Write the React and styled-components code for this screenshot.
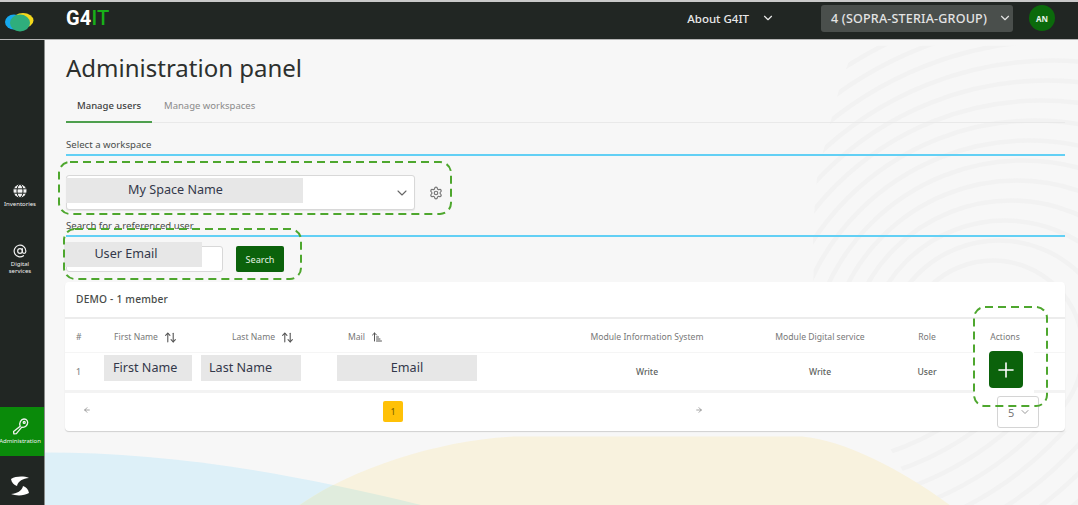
import React from 'react';
import styled, { createGlobalStyle } from 'styled-components';
import { ChevronDown, Settings, AtSign, ArrowUpDown, ArrowUpNarrowWide, Plus, ArrowLeft, ArrowRight } from 'lucide-react';

const GlobalStyle = createGlobalStyle`
    html, body { margin: 0; padding: 0; height: 100%; overflow: hidden; }
    body { font-family: "Noto Sans", "Liberation Sans", sans-serif; background: #f7f7f7; color: #2b2f2c; }
`;

const Shell = styled.div`
    display: grid;
    grid-template-columns: 45px 1fr;
    grid-template-rows: 40px 1fr;
    width: 1078px;
    height: 505px;
    overflow: hidden;
`;

const TopBar = styled.header`
    grid-column: 1 / 3;
    display: flex;
    align-items: center;
    box-sizing: border-box;
    border-top: 2px solid #c9c9c9;
    border-bottom: 1px solid #b5b5b5;
    background: #212623;
    color: #fff;
    padding: 0 23px 5px 5px;
`;

const Logo = styled.svg`
    width: 29px;
    height: 20px;
    margin-top: 7px;
`;

const Brand = styled.div`
    margin-left: 32px;
    font-family: "Roboto", sans-serif;
    font-size: 20px;
    font-weight: 700;
    letter-spacing: 0.2px;

    span { color: #18b018; font-weight: 500; }
`;

const AboutMenu = styled.div`
    display: flex;
    align-items: center;
    gap: 12px;
    margin-left: auto;
    font-size: 11.5px;
    font-weight: 500;
    color: #e8e8e8;
`;

const OrgSelect = styled.div`
    display: flex;
    align-items: center;
    justify-content: space-between;
    width: 192px;
    height: 27px;
    box-sizing: border-box;
    margin-left: 46px;
    padding: 0 1px 0 10px;
    background: #4a4f4c;
    border-radius: 3px;
    font-size: 12.5px;
    font-weight: 500;
    letter-spacing: 0.2px;
    color: #e4e4e4;
    white-space: nowrap;
`;

const Avatar = styled.div`
    display: flex;
    align-items: center;
    justify-content: center;
    width: 26px;
    height: 26px;
    margin-left: 16px;
    border-radius: 50%;
    background: #0b6a0b;
    font-size: 8px;
    font-weight: 700;
    color: #e8f3e8;
`;

const SideBar = styled.nav`
    display: flex;
    flex-direction: column;
    background: #212623;
    border-right: 1px solid #8a8d8b;
    box-sizing: border-box;
`;

const SideItem = styled.div`
    display: flex;
    flex-direction: column;
    align-items: center;
    justify-content: center;
    box-sizing: border-box;
    height: ${p => p.$h}px;
    margin-top: ${p => p.$top}px;
    padding-right: 4px;
    background: ${p => (p.$active ? '#0a8a0a' : 'transparent')};
    color: #f2f2f2;
    font-size: 6px;
    line-height: 7px;
    text-align: center;

    svg { margin-bottom: ${p => p.$gap}px; }
`;

const Main = styled.main`
    position: relative;
    overflow: hidden;
    background: #f7f7f7;
`;

const Backdrop = styled.svg`
    position: absolute;
    inset: 0;
    width: 100%;
    height: 100%;
`;

const Content = styled.div`
    position: relative;
    display: flex;
    flex-direction: column;
    padding: 0 13px 0 21px;
`;

const Title = styled.h1`
    margin: 11px 0 0;
    font-size: 24px;
    line-height: 34px;
    font-weight: 400;
    color: #2d302e;
`;

const Tabs = styled.div`
    display: flex;
    gap: 1px;
    height: 31px;
    margin-top: 6px;
    border-bottom: 1px solid #e9e9e9;
`;

const Tab = styled.div`
    box-sizing: border-box;
    height: 32px;
    padding: 8px 11px 0;
    font-size: 9.5px;
    line-height: 14px;
    color: ${p => (p.$active ? '#3d403e' : '#8a8a8a')};
    font-weight: ${p => (p.$active ? 500 : 400)};
    border-bottom: 2px solid ${p => (p.$active ? '#4e9f4e' : 'transparent')};
`;

const SectionLabel = styled.div`
    margin-top: ${p => p.$top}px;
    height: 20px;
    box-sizing: border-box;
    padding-top: 2px;
    border-bottom: 2px solid #62d0f5;
    font-size: 9.6px;
    line-height: 14px;
    color: #4a4d4b;
`;

const SelectRow = styled.div`
    display: flex;
    align-items: center;
    gap: 14px;
    margin-top: 19px;
    color: #777;
`;

const WorkspaceSelect = styled.div`
    position: relative;
    display: flex;
    align-items: center;
    justify-content: flex-end;
    width: 349px;
    height: 35px;
    box-sizing: border-box;
    padding-right: 4px;
    background: #fff;
    border: 1px solid #d8d8d8;
    border-radius: 3px;
    box-shadow: 0 1px 1px rgba(0, 0, 0, 0.08);
`;

const Mask = styled.div`
    position: absolute;
    left: ${p => p.$left}px;
    top: ${p => p.$top}px;
    width: ${p => p.$w}px;
    height: ${p => p.$h}px;
    display: flex;
    align-items: center;
    justify-content: ${p => p.$align || 'center'};
    box-sizing: border-box;
    padding: 0 ${p => p.$right || 0}px 2px ${p => p.$pad || 0}px;
    background: #e7e7e7;
    font-size: 12.6px;
    font-weight: 400;
    color: #33384a;
    white-space: nowrap;
`;

const SearchRow = styled.div`
    display: flex;
    gap: 13px;
    margin-top: 9px;
`;

const SearchInput = styled.div`
    position: relative;
    width: 157px;
    height: 26px;
    box-sizing: border-box;
    background: #fff;
    border: 1px solid #d8d8d8;
    border-radius: 3px;
`;

const SearchButton = styled.button`
    width: 48px;
    height: 26px;
    padding: 0;
    border: 0;
    border-radius: 2px;
    background: #0b620b;
    color: #d5e6d5;
    font-family: inherit;
    font-size: 9px;
    font-weight: 500;
`;

const Card = styled.section`
    display: flex;
    flex-direction: column;
    height: 149px;
    margin: 10px 0 0 -1px;
    background: #fff;
    border-radius: 4px;
    box-shadow: 0 1px 1px rgba(0, 0, 0, 0.16);
`;

const CardTitle = styled.div`
    height: 37px;
    box-sizing: border-box;
    padding: 10px 11px 0;
    border-bottom: 2px solid #ececec;
    font-size: 10.2px;
    line-height: 14px;
    font-weight: 500;
    letter-spacing: 0.2px;
    color: #484b49;
`;

const Row = styled.div`
    display: grid;
    grid-template-columns: 38px 118px 116px 212px 174px 172px 42px 114px;
    align-items: center;
    position: relative;
    height: ${p => p.$h}px;
    padding-left: 11px;
    padding-top: ${p => p.$pt || 0}px;
    box-sizing: border-box;
    border-bottom: ${p => p.$line}px solid ${p => p.$color};
    font-size: 8.6px;
    font-weight: 500;
    color: #5c5f5d;
`;

const HeadCell = styled.div`
    display: flex;
    align-items: center;
    justify-content: ${p => (p.$center ? 'center' : 'flex-start')};
    gap: 6px;
    font-size: 8.6px;
    font-weight: 400;
    color: #777;
    white-space: nowrap;

    svg { color: #555; }
`;

const Cell = styled.div`
    text-align: ${p => (p.$center ? 'center' : 'left')};
    color: ${p => (p.$muted ? '#8a8a8a' : 'inherit')};
`;

const ActionBox = styled.div`
    position: absolute;
    left: 909px;
    top: -10px;
    width: 60px;
    height: 50px;
    display: flex;
    align-items: center;
    justify-content: center;
    box-sizing: border-box;
    padding: 3px 0 0 4px;
    background: #fff;
`;

const AddButton = styled.button`
    display: flex;
    align-items: center;
    justify-content: center;
    width: 34px;
    height: 37px;
    padding: 0;
    border: 0;
    border-radius: 4px;
    background: #0b620b;
    color: #fff;
`;

const Footer = styled.div`
    position: relative;
    flex: 1;
    color: #777;
`;

const FooterArrow = styled.span`
    position: absolute;
    left: ${p => p.$left}px;
    top: 13px;
    display: flex;
`;

const PageNumber = styled.div`
    position: absolute;
    left: 318px;
    top: 8px;
    width: 20px;
    height: 21px;
    display: flex;
    align-items: center;
    justify-content: center;
    border-radius: 2px;
    background: #ffc107;
    font-size: 8px;
    font-weight: 500;
    color: #7a6200;
`;

const PageSize = styled.div`
    position: absolute;
    left: 932px;
    top: 3px;
    width: 42px;
    height: 32px;
    display: flex;
    align-items: center;
    gap: 5px;
    box-sizing: border-box;
    padding: 0 0 0 10px;
    background: #fff;
    border: 1px solid #d4d4d4;
    border-radius: 3px;
    font-size: 11px;
    color: #777;
`;

const Annotation = styled.svg`
    position: absolute;
    left: ${p => p.$left}px;
    top: ${p => p.$top}px;
    width: ${p => p.$w}px;
    height: ${p => p.$h}px;
    overflow: visible;
    pointer-events: none;
`;

const Dashed = ({ left, top, w, h }) => (
    <Annotation $left={left} $top={top} $w={w} $h={h} viewBox={`0 0 ${w} ${h}`}>
        <rect x="1" y="1" width={w - 2} height={h - 2} rx="11" fill="none" stroke="#4ea72e" strokeWidth="2" strokeDasharray="8 5" />
    </Annotation>
);

const GlobeIcon = () => (
    <svg width="14" height="14" viewBox="0 0 14 14">
        <circle cx="7" cy="7" r="6.5" fill="#f2f2f2" />
        <ellipse cx="7" cy="7" rx="3" ry="6.5" fill="none" stroke="#212623" strokeWidth="1" />
        <path d="M1 4.8 H13 M1 9.2 H13" stroke="#212623" strokeWidth="1" />
    </svg>
);

const KeyIcon = () => (
    <svg width="17" height="17" viewBox="0 0 17 17" fill="none" stroke="#f2f2f2" strokeWidth="1.3" strokeLinejoin="round">
        <path d="M8.2 8.2 C6.8 5 9 1 12 1 C15 1 16.3 3.5 15.4 6 C14.6 8.2 12 9.6 9.8 9.2 L4.4 15.6 L1.8 15.8 L1.6 13.6 Z" />
        <circle cx="12.2" cy="4.4" r="1" />
    </svg>
);

const SopraLogo = () => (
    <svg width="24" height="20" viewBox="0 0 24 20" fill="#fff">
        <path d="M3 3 C8 0 16 0 21 2 C15 2.5 10 5 9 10 C6 9 3.5 6.5 3 3Z" />
        <path d="M21 17 C16 20 8 20 3 18 C9 17.5 14 15 15 10 C18 11 20.5 13.5 21 17Z" />
    </svg>
);

// eccentric rings of the fingerprint behind the page
const rings = Array.from({ length: 15 }, (_, i) => ({
    cx: 948 + 6 * i,
    cy: 305 + 5 * i,
    r: 90 + 25 * i,
}));
const lowerRings = Array.from({ length: 14 }, (_, i) => 270 + 20 * i);

const blueWave = 'M0 407 C120 407 240 425 398 465 H0Z';

const App = () => {
    const heads = ['Module Information System', 'Module Digital service', 'Role', 'Actions'];
    return (
        <>
            <GlobalStyle />
            <Shell>
                <TopBar>
                    <Logo viewBox="0 0 29 20">
                        <ellipse cx="18" cy="8.5" rx="10.5" ry="7.5" fill="#f4d81c" />
                        <ellipse cx="9" cy="10" rx="9" ry="7.5" fill="#16a9ee" />
                        <ellipse cx="15" cy="11" rx="10" ry="8.5" fill="#2fae7c" />
                    </Logo>
                    <Brand>G4<span>IT</span></Brand>
                    <AboutMenu>About G4IT <ChevronDown size={14} strokeWidth={2} /></AboutMenu>
                    <OrgSelect>4 (SOPRA-STERIA-GROUP) <ChevronDown size={14} strokeWidth={2} /></OrgSelect>
                    <Avatar>AN</Avatar>
                </TopBar>

                <SideBar>
                    <SideItem $h={44} $top={134} $gap={3}>
                        <GlobeIcon />
                        Inventories
                    </SideItem>
                    <SideItem $h={50} $top={16} $gap={3}>
                        <AtSign size={14} strokeWidth={2} />
                        Digital<br />services
                    </SideItem>
                    <SideItem $h={49} $top={123} $active $gap={3}>
                        <KeyIcon />
                        Administration
                    </SideItem>
                    <SideItem $h={60} $top={0} $gap={0}>
                        <SopraLogo />
                    </SideItem>
                </SideBar>

                <Main>
                    <Backdrop viewBox="0 0 1033 465" aria-hidden="true">
                        <defs>
                            <clipPath id="print-top">
                                <polygon points="805,13 795,40 782,90 772,133 768,183 770,385 1033,385 1033,0 830,0" />
                            </clipPath>
                            <clipPath id="print-bottom">
                                <polygon points="835,385 880,465 1033,465 1033,385" />
                            </clipPath>
                            <clipPath id="blue-clip">
                                <path d={blueWave} />
                            </clipPath>
                        </defs>
                        <g clipPath="url(#print-top)" fill="none" stroke="#f2f2f2" strokeWidth="4.5">
                            {rings.map(c => <circle key={c.r} cx={c.cx} cy={c.cy} r={c.r} />)}
                        </g>
                        <g clipPath="url(#print-bottom)" fill="none" stroke="#f2f2f2" strokeWidth="4.5">
                            {lowerRings.map(r => <circle key={r} cx="760" cy="150" r={r} />)}
                        </g>
                        <path d={blueWave} fill="#ddf0f8" />
                        <path d="M247 465 C300 425 390 395 468 391 L757 391 C800 395 860 425 912 465 Z" fill="#f8f2de" />
                        <path d="M247 465 C300 425 390 395 468 391 V465 Z" fill="#e0ecdd" clipPath="url(#blue-clip)" />
                    </Backdrop>
                    <Content>
                        <Title>Administration panel</Title>
                        <Tabs>
                            <Tab $active>Manage users</Tab>
                            <Tab>Manage workspaces</Tab>
                        </Tabs>
                        <SectionLabel $top={13}>Select a workspace</SectionLabel>
                        <SelectRow>
                            <WorkspaceSelect>
                                <Mask $left={-1} $top={2} $w={237} $h={25} $right={18}>My Space Name</Mask>
                                <ChevronDown size={16} strokeWidth={1.6} color="#666" />
                            </WorkspaceSelect>
                            <Settings size={14} strokeWidth={2} />
                        </SelectRow>
                        <SectionLabel $top={7}>Search for a referenced user</SectionLabel>
                        <SearchRow>
                            <SearchInput>
                                <Mask $left={-3} $top={-5} $w={138} $h={25} $right={14}>User Email</Mask>
                            </SearchInput>
                            <SearchButton>Search</SearchButton>
                        </SearchRow>
                        <Card>
                            <CardTitle>DEMO - 1 member</CardTitle>
                            <Row $h={34} $line={1} $color="#f5f5f5" $pt={3}>
                                <HeadCell>#</HeadCell>
                                <HeadCell>First Name <ArrowUpDown size={13} strokeWidth={2} /></HeadCell>
                                <HeadCell>Last Name <ArrowUpDown size={13} strokeWidth={2} /></HeadCell>
                                <HeadCell>Mail <ArrowUpNarrowWide size={12} /></HeadCell>
                                {heads.map(h => <HeadCell key={h} $center>{h}</HeadCell>)}
                            </Row>
                            <Row $h={40} $line={3} $color="#f3f3f3">
                                <Cell $muted>1</Cell>
                                <Cell />
                                <Cell />
                                <Cell />
                                <Cell $center>Write</Cell>
                                <Cell $center>Write</Cell>
                                <Cell $center>User</Cell>
                                <Mask $left={39} $top={2} $w={88} $h={26} $align="flex-start" $pad={9}>First Name</Mask>
                                <Mask $left={136} $top={2} $w={100} $h={26} $align="flex-start" $pad={8}>Last Name</Mask>
                                <Mask $left={272} $top={2} $w={140} $h={26}>Email</Mask>
                                <ActionBox>
                                    <AddButton><Plus size={24} strokeWidth={1.6} /></AddButton>
                                </ActionBox>
                            </Row>
                            <Footer>
                                <FooterArrow $left={18}><ArrowLeft size={8} /></FooterArrow>
                                <PageNumber>1</PageNumber>
                                <FooterArrow $left={630}><ArrowRight size={8} /></FooterArrow>
                                <PageSize>5 <ChevronDown size={12} strokeWidth={1.5} /></PageSize>
                            </Footer>
                        </Card>
                    </Content>
                    <Dashed left={13} top={121} w={394} h={54} />
                    <Dashed left={18} top={188} w={239} h={52} />
                    <Dashed left={928} top={266} w={75} h={101} />
                </Main>
            </Shell>
        </>
    );
};

export default App;
